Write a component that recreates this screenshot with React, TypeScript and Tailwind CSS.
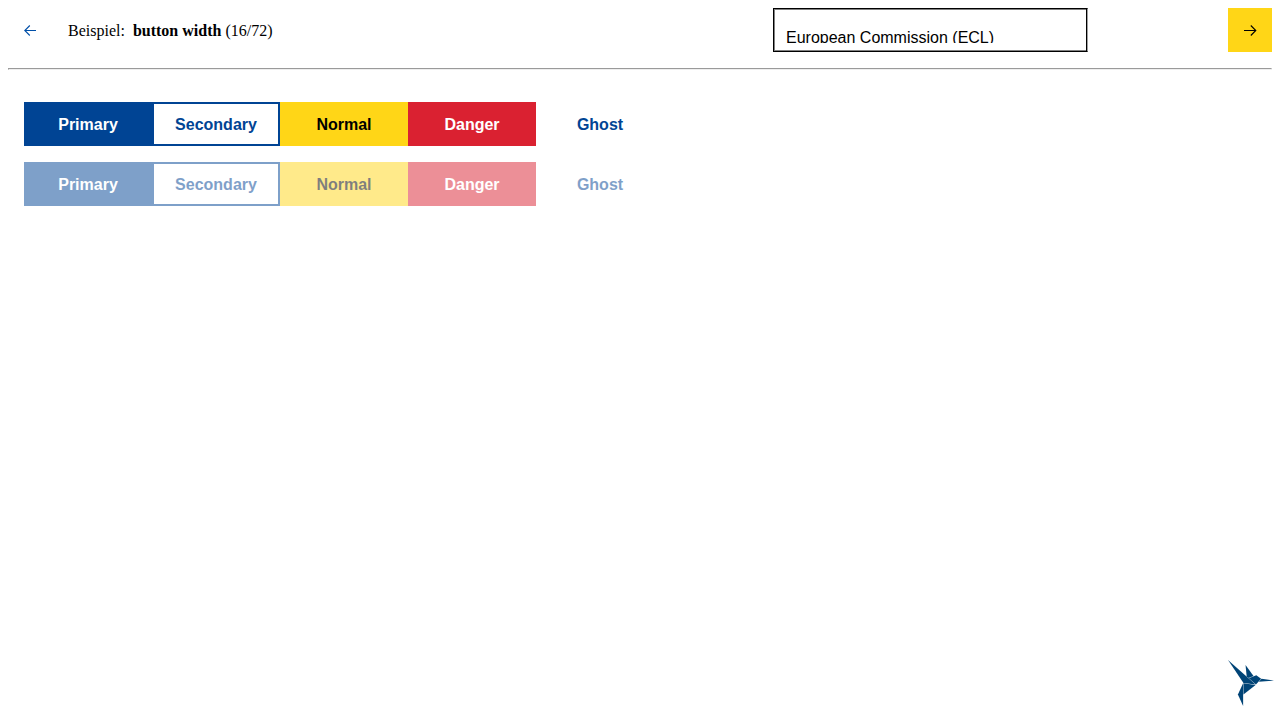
const kinds = [
  { label: 'Primary', style: 'bg-[#004494] border-[#004494] text-white' },
  { label: 'Secondary', style: 'bg-white border-[#004494] text-[#004494]' },
  { label: 'Normal', style: 'bg-[#ffd617] border-[#ffd617] text-black' },
  { label: 'Danger', style: 'bg-[#da2131] border-[#da2131] text-white' },
  { label: 'Ghost', style: 'bg-transparent border-transparent text-[#004494]' },
];

function ButtonRow({ disabled = false }: { disabled?: boolean }) {
  return (
    <div className="flex">
      {kinds.map((k) => (
        <button
          key={k.label}
          disabled={disabled}
          className={`h-11 w-32 border-2 pt-0.5 font-bold leading-5 ${k.style} ${disabled ? 'opacity-50' : ''}`}
        >
          {k.label}
        </button>
      ))}
    </div>
  );
}

function Arrow({ left = false }: { left?: boolean }) {
  return (
    <svg width="14" height="12" viewBox="0 0 14 12" fill="none" stroke="currentColor" strokeWidth="1.1">
      {left ? <path d="M13 6.5H1.8M6.8 1.5L1.8 6.5L6.8 11.5" /> : <path d="M1 6.5H12.5M7.8 1.5L12.8 6.5L7.8 11.5" />}
    </svg>
  );
}

function Bird() {
  return (
    <svg width="52" height="52" viewBox="0 0 600 600" fill="#004477">
      <path d="M353 322L213 304V434L353 322Z" />
      <path d="M209 564V304L149 434L209 564Z" />
      <path d="M357 316L417 250L361 210L275 244L357 316Z" />
      <path d="M329 218L237 92L250 222L272 241L329 218Z" />
      <path d="M353 318L35 36L213 300L353 318Z" />
      <path d="M391 286L565 272L421 252L391 286Z" />
    </svg>
  );
}

export default function App() {
  return (
    <div className="flex h-screen flex-col overflow-hidden bg-white p-2 font-['Liberation_Sans',Arial,sans-serif] text-base text-black">
      <header className="flex h-11 shrink-0 items-center">
        <button aria-label="Zurück" className="flex size-11 items-center justify-center text-[#004fa8]">
          <Arrow left />
        </button>
        <div className="ml-4 w-[705px] whitespace-pre pt-0.5 font-['Liberation_Serif','Times_New_Roman',serif] leading-[18px]">
          Beispiel:{'  '}<b>button width</b> (16/72)
        </div>
        <div className="h-11 w-[315px] border border-black border-r-[#a0a0a0] p-px shadow-[inset_-1px_0_0_#000,inset_1px_1px_0_#808080,inset_0_-1px_0_#808080]">
          <div className="h-[33px] overflow-hidden pl-[11px] pt-[19px] leading-[18px]">European Commission (ECL)</div>
        </div>
        <button aria-label="Weiter" className="ml-auto flex size-11 items-center justify-center bg-[#ffd617] text-black">
          <Arrow />
        </button>
      </header>
      <hr className="mt-4 h-0.5 shrink-0 border border-b-[#eeeeee] border-l-[#9a9a9a] border-r-[#eeeeee] border-t-[#9a9a9a]" />
      <main className="flex flex-col gap-4 px-4 pt-8">
        <ButtonRow />
        <ButtonRow disabled />
      </main>
      <footer className="-mr-[5px] mt-auto flex justify-end pb-[3px]">
        <Bird />
      </footer>
    </div>
  );
}
